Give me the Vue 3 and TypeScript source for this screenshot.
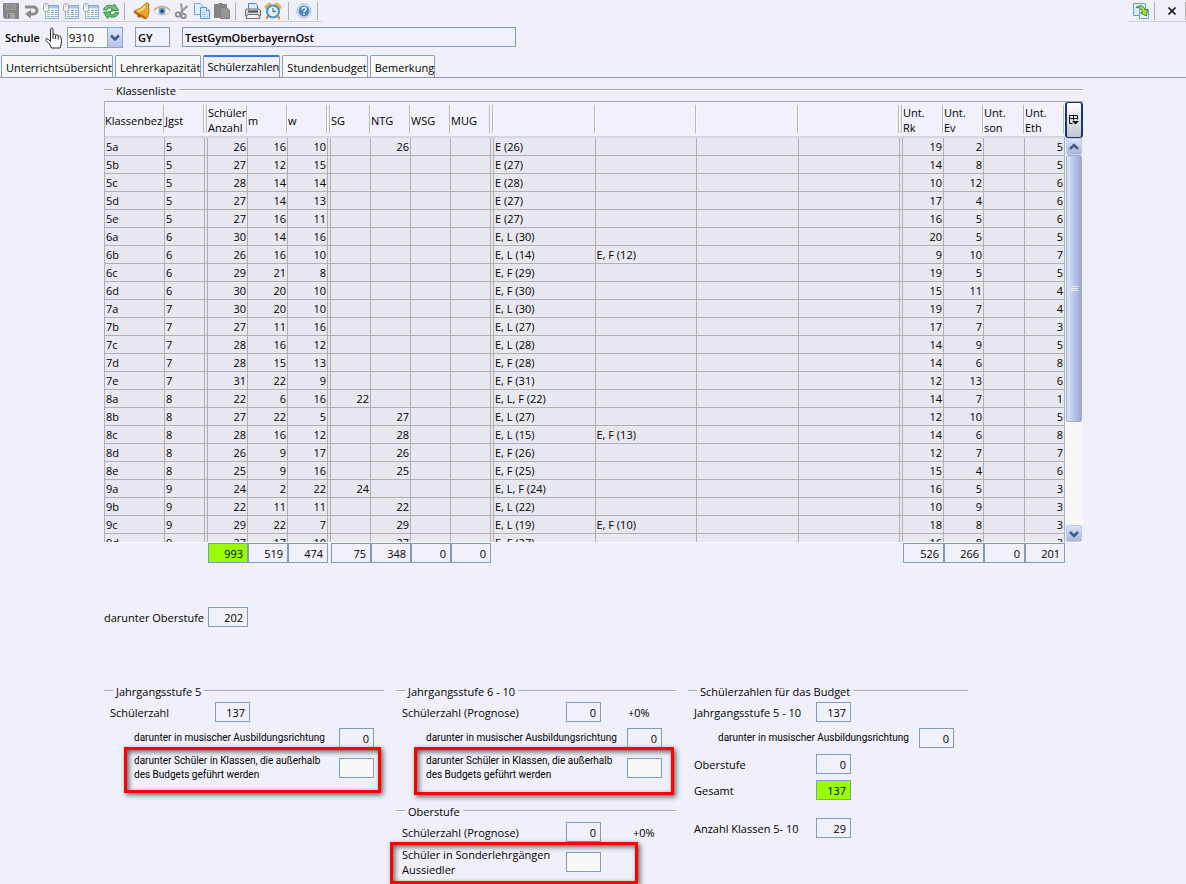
<script setup lang="ts">
import { ref } from 'vue'

type Row = [string, number, number, number, string, string, string, string, number, number, number]

const school = ref('9310')
const activeTab = ref('Schülerzahlen')
const tabs = ['Unterrichtsübersicht', 'Lehrerkapazität', 'Schülerzahlen', 'Stundenbudget', 'Bemerkung']

// Klasse, Schüler, m, w, SG, NTG, Sprachen 1, Sprachen 2, Rk, Ev, Eth
const rows: Row[] = [
  ['5a', 26, 16, 10, '', '26', 'E (26)', '', 19, 2, 5],
  ['5b', 27, 12, 15, '', '', 'E (27)', '', 14, 8, 5],
  ['5c', 28, 14, 14, '', '', 'E (28)', '', 10, 12, 6],
  ['5d', 27, 14, 13, '', '', 'E (27)', '', 17, 4, 6],
  ['5e', 27, 16, 11, '', '', 'E (27)', '', 16, 5, 6],
  ['6a', 30, 14, 16, '', '', 'E, L (30)', '', 20, 5, 5],
  ['6b', 26, 16, 10, '', '', 'E, L (14)', 'E, F (12)', 9, 10, 7],
  ['6c', 29, 21, 8, '', '', 'E, F (29)', '', 19, 5, 5],
  ['6d', 30, 20, 10, '', '', 'E, F (30)', '', 15, 11, 4],
  ['7a', 30, 20, 10, '', '', 'E, L (30)', '', 19, 7, 4],
  ['7b', 27, 11, 16, '', '', 'E, L (27)', '', 17, 7, 3],
  ['7c', 28, 16, 12, '', '', 'E, L (28)', '', 14, 9, 5],
  ['7d', 28, 15, 13, '', '', 'E, F (28)', '', 14, 6, 8],
  ['7e', 31, 22, 9, '', '', 'E, F (31)', '', 12, 13, 6],
  ['8a', 22, 6, 16, '22', '', 'E, L, F (22)', '', 14, 7, 1],
  ['8b', 27, 22, 5, '', '27', 'E, L (27)', '', 12, 10, 5],
  ['8c', 28, 16, 12, '', '28', 'E, L (15)', 'E, F (13)', 14, 6, 8],
  ['8d', 26, 9, 17, '', '26', 'E, F (26)', '', 12, 7, 7],
  ['8e', 25, 9, 16, '', '25', 'E, F (25)', '', 15, 4, 6],
  ['9a', 24, 2, 22, '24', '', 'E, L, F (24)', '', 16, 5, 3],
  ['9b', 22, 11, 11, '', '22', 'E, L (22)', '', 10, 9, 3],
  ['9c', 29, 22, 7, '', '29', 'E, L (19)', 'E, F (10)', 18, 8, 3],
  ['9d', 27, 17, 10, '', '27', 'E, F (27)', '', 16, 8, 3],
]

const totals = [
  { label: 'Schüler Anzahl', value: '993', cls: 'c-sum lime' },
  { label: 'm', value: '519', cls: 'c-m' },
  { label: 'w', value: '474', cls: 'c-w' },
  { label: 'SG', value: '75', cls: 'c-sg' },
  { label: 'NTG', value: '348', cls: 'c-ntg' },
  { label: 'WSG', value: '0', cls: 'c-wsg' },
  { label: 'MUG', value: '0', cls: 'c-mug' },
  { label: 'Unt. Rk', value: '526', cls: 'c-rk' },
  { label: 'Unt. Ev', value: '266', cls: 'c-ev' },
  { label: 'Unt. son', value: '0', cls: 'c-son' },
  { label: 'Unt. Eth', value: '201', cls: 'c-eth' },
]
</script>

<template>
  <div class="app">
    <header class="bars">
      <div class="toolbar">
        <button class="tool" aria-label="Speichern">
          <svg width="18" height="18" viewBox="0 0 18 18"><path d="M1 2q0-1 1-1h14q1 0 1 1v14q0 1-1 1H3l-2-2z" fill="#858585" /><path d="M4 2h10v6H4z" fill="#9c9c9c" /><path d="M5 4h8M5 6h8" stroke="#858585" /><path d="M5 11h8v6H5z" fill="#a6a6a6" /><path d="M6 12h2v4H6z" fill="#777" /></svg>
        </button>
        <button class="tool" aria-label="Rückgängig">
          <svg width="18" height="18" viewBox="0 0 18 18"><path d="M3 5h8.500a3.500 3.500 0 0 1 0 7H8" fill="none" stroke="#8a8a8a" stroke-width="3" /><path d="M9 7.500v9L3 12z" fill="#8a8a8a" /></svg>
        </button>
        <button v-for="n in 3" :key="n" class="tool" :aria-label="'Tabelle ' + n">
          <svg width="18" height="18" viewBox="0 0 18 18"><path d="M3.500 3.500h13v13h-13z" fill="#fff" stroke="#86aedb" /><path d="M7 4h9v2.500H7z" fill="#a3c3e8" /><path d="M5 8.500h3M5 10.500h3M5 12.500h3M5 14.500h3" stroke="#8fbf78" /><path d="M9 8.500h3M13 8.500h2.500M9 10.500h3M13 10.500h2.500M9 12.500h3M13 12.500h2.500M9 14.500h3M13 14.500h2.500" stroke="#6f9fd6" /><rect x="1.500" y="1.500" width="5" height="8" rx="2" fill="#f2f2f2" stroke="#ababab" /><path d="M4 2v3" stroke="#bbb" /></svg>
        </button>
        <button class="tool" aria-label="Aktualisieren">
          <svg width="18" height="18" viewBox="0 0 18 18"><path d="M1.500 8C2 4 6.500 2 11 4.200L12.500 2l4 6.200-7.500.6 1.300-2.300C7.500 5.300 5.500 6 4.800 8z" fill="#7cc47d" stroke="#2f8f43" /><path d="M16.500 10.500c-.5 4-5 6-9.500 3.800L5.500 16.500l-4-6.200 7.500-.6-1.300 2.300c2.800 1.200 4.800.5 5.500-1.500z" fill="#6dbb70" stroke="#2f8f43" /></svg>
        </button>
        <span class="sep"></span>
        <button class="tool bell" aria-label="Benachrichtigung">
          <svg width="18" height="18" viewBox="0 0 18 18"><path d="M14 1c2 .3 2.500 1.500 1.500 3 1 4 .5 7.500-1.500 12l-1.500 1L1 10.500l.5-2C6 7.500 9 5.500 11.500 2.500 12.300 1.500 13 1 14 1z" fill="#eda532" stroke="#bb7715" /><path d="M12.500 4C10 7.500 7 9 4 10" fill="none" stroke="#ffdf86" stroke-width="2" /><path d="M1.500 10l11 6" stroke="#b36a12" stroke-width="2" /><circle cx="6" cy="14" r="1.700" fill="#a35a12" /></svg>
        </button>
        <button class="tool" aria-label="Ansicht">
          <svg width="18" height="18" viewBox="0 0 18 18"><path d="M1 9.500C4 4.500 14 4.500 17 9.500c-3 4.500-13 4.500-16 0z" fill="#fff" stroke="#e0bfa9" /><path d="M1 8.500C4 3 14 3 17 8.500" fill="none" stroke="#d3a98e" stroke-width="1.500" /><circle cx="9" cy="9" r="3.500" fill="#6e9fd4" /><circle cx="9" cy="9" r="1.600" fill="#1c3558" /></svg>
        </button>
        <button class="tool" aria-label="Ausschneiden">
          <svg width="18" height="18" viewBox="0 0 18 18"><path d="M8 1.500l1.500 9.500M14.500 4L7 11" stroke="#999" stroke-width="2" /><circle cx="5" cy="12.500" r="2.200" fill="none" stroke="#8a8a8a" stroke-width="1.800" /><circle cx="10.500" cy="14" r="2.200" fill="none" stroke="#8a8a8a" stroke-width="1.800" /></svg>
        </button>
        <button class="tool" aria-label="Kopieren">
          <svg width="18" height="18" viewBox="0 0 18 18"><path d="M1.500 1.500h6l3 3v8h-9z" fill="#e3effc" stroke="#71a3dc" /><path d="M7.500 5.500h6l3 3v8h-9z" fill="#d4e6fa" stroke="#5b93d5" /><path d="M13.500 5.500v3h3" fill="#fff" stroke="#5b93d5" /><path d="M9 10.500h5M9 12.500h6M9 14.500h6" stroke="#b4d0f0" /></svg>
        </button>
        <button class="tool" aria-label="Einfügen">
          <svg width="18" height="18" viewBox="0 0 18 18"><path d="M1 2h4l1-1h3l1 1h4v14H1z" fill="#858585" /><path d="M7.500 5.500h6l3 3v8h-9z" fill="#969696" stroke="#7f7f7f" /></svg>
        </button>
        <span class="sep"></span>
        <button class="tool print" aria-label="Drucken">
          <svg width="18" height="18" viewBox="0 0 18 18"><path d="M4.500 1.500h7l2 2V9h-9z" fill="#dcebfb" stroke="#4a83c7" /><path d="M1.500 9q0-2 2-2h11q2 0 2 2v5h-15z" fill="#d6d6d6" stroke="#6e6e72" /><path d="M4 9.500h10" stroke="#494b50" stroke-width="2" /><path d="M3.500 12.500h11l1.500 4H2z" fill="#f3f3f3" stroke="#707276" /></svg>
        </button>
        <button class="tool clock" aria-label="Termine">
          <svg width="18" height="18" viewBox="0 0 18 18"><path d="M2.500 5l3-2.500M15.500 5l-3-2.500" stroke="#e8b04a" stroke-width="4" stroke-linecap="round" /><path d="M4 14l-1.500 3M14 14l1.500 3" stroke="#cf8a26" stroke-width="2" /><circle cx="9" cy="9.500" r="6" fill="#e2f2ff" stroke="#4490d6" stroke-width="2" /><path d="M9 6v4l3-1" fill="none" stroke="#456" /></svg>
        </button>
        <span class="sep"></span>
        <button class="tool help" aria-label="Hilfe">
          <svg width="18" height="18" viewBox="0 0 18 18"><circle cx="9" cy="9" r="7" fill="#e6eef8" stroke="#a3bcdc" /><circle cx="9" cy="9" r="5.500" fill="#4c86cb" /><path d="M7 7.500c0-3 4.500-2.500 4 0-.3 1-2 1.200-2 2.700M9 11.500v1.500" fill="none" stroke="#fff" stroke-width="1.500" /></svg>
        </button>
        <span class="sep"></span>
      </div>
      <div class="toolbar right">
        <button class="tool" aria-label="Übernehmen">
          <svg width="18" height="18" viewBox="0 0 18 18"><path d="M1.500 1.500h12v12h-12z" fill="#dcecff" stroke="#6b9fdc" /><path d="M7.500 7.500h9v9h-9z" fill="#eef6ff" stroke="#6b9fdc" /><path d="M4 5.500C7.500 2.500 12 3.500 13 8l2.500-1-1 7L8.500 11l2-1C9.500 6.500 7.500 5.500 4 5.500z" fill="#a4e03c" stroke="#39823a" /></svg>
        </button>
        <span class="sep"></span>
        <button class="tool close" aria-label="Schließen">
          <svg width="18" height="18" viewBox="0 0 18 18"><path d="M5.500 5.500l7 7M12.500 5.500l-7 7" stroke="#111" stroke-width="1.700" /></svg>
        </button>
        <span class="sep"></span>
      </div>
    </header>

    <form class="school" @submit.prevent>
      <label for="school">Schule</label>
      <svg class="hand" width="18" height="23" viewBox="0 0 18 23"><path d="M5.500 14.500V2.500q0-1.500 1.200-1.500T8 2.500V8q.3-.9 1.400-.7 1.200.1 1.200 1.200.3-.7 1.400-.5 1.200.2 1.200 1.300.4-.6 1.400-.3 1 .3 1.400 1.700.8 3 .3 6l-1.300 4.300H6.500L4.500 17 1 13.500q-.5-1.400.9-1.800 1.400 0 3.600 2.800z" fill="#fff" stroke="#222" /><path d="M8 8v4M10.600 8.500V12M13.200 9.500V12.500" stroke="#222" /></svg>
      <span class="combo">
        <select id="school" v-model="school"><option>9310</option></select>
        <span class="combo-btn"><svg width="10" height="8" viewBox="0 0 10 8"><path d="M1 1.500l4 4 4-4" fill="none" stroke="#3f5e86" stroke-width="2.500" /></svg></span>
      </span>
      <input class="field type" aria-label="Schulart" value="GY" readonly />
      <input class="field name" aria-label="Schulname" value="TestGymOberbayernOst" readonly />
    </form>

    <nav class="tabs" role="tablist">
      <button
        v-for="t in tabs"
        :key="t"
        role="tab"
        :aria-selected="t === activeTab"
        :class="['tab', { active: t === activeTab }]"
        @click="activeTab = t"
      >{{ t }}</button>
    </nav>

    <main>
      <section>
        <h2 class="title">Klassenliste</h2>
        <div class="listing">
          <div class="clip">
            <table>
              <colgroup>
                <col class="w60" /><col class="w40" /><col class="w3" />
                <col class="w40" /><col class="w40" /><col class="w40" /><col class="w3" />
                <col class="w40" /><col class="w40" /><col class="w40" /><col class="w40" /><col class="w3" />
                <col /><col /><col /><col /><col class="w3" />
                <col class="w41" /><col class="w40" /><col class="w41" /><col class="w40" />
              </colgroup>
              <thead>
                <tr>
                  <th>Klassenbez</th><th>Jgst</th><th></th>
                  <th>Schüler<br />Anzahl</th><th>m</th><th>w</th><th></th>
                  <th>SG</th><th>NTG</th><th>WSG</th><th>MUG</th><th></th>
                  <th></th><th></th><th></th><th></th><th></th>
                  <th>Unt.<br />Rk</th><th>Unt.<br />Ev</th><th>Unt.<br />son</th><th>Unt.<br />Eth</th>
                </tr>
              </thead>
              <tbody>
                <tr v-for="r in rows" :key="r[0]">
                  <td>{{ r[0] }}</td><td>{{ r[0][0] }}</td><td></td>
                  <td class="n">{{ r[1] }}</td><td class="n">{{ r[2] }}</td><td class="n">{{ r[3] }}</td><td></td>
                  <td class="n">{{ r[4] }}</td><td class="n">{{ r[5] }}</td><td></td><td></td><td></td>
                  <td>{{ r[6] }}</td><td>{{ r[7] }}</td><td></td><td></td><td></td>
                  <td class="n">{{ r[8] }}</td><td class="n">{{ r[9] }}</td><td></td><td class="n">{{ r[10] }}</td>
                </tr>
              </tbody>
            </table>
          </div>
          <div class="side">
            <button class="columns" aria-label="Spalten auswählen">
              <svg width="12" height="12" viewBox="0 0 12 12"><path d="M4.500 9.500h-3v-8h8v4M1.500 4.500h8M5.500 1.500v5" fill="none" stroke="#111" /><path d="M4 7h7L7.500 10.500z" fill="#111" /></svg>
            </button>
            <button class="arrow" aria-label="Nach oben"><svg width="10" height="8" viewBox="0 0 10 8"><path d="M1 6l4-4 4 4" fill="none" stroke="#3f5e86" stroke-width="2.500" /></svg></button>
            <div class="track"><div class="thumb"><i></i><i></i><i></i></div></div>
            <button class="arrow" aria-label="Nach unten"><svg width="10" height="8" viewBox="0 0 10 8"><path d="M1 2l4 4 4-4" fill="none" stroke="#3f5e86" stroke-width="2.500" /></svg></button>
          </div>
        </div>
        <div class="totals">
          <input v-for="t in totals" :key="t.label" :class="['field', 'num', t.cls]" :aria-label="'Summe ' + t.label" :value="t.value" readonly />
        </div>
        <div class="upper">
          <label for="upper">darunter Oberstufe</label>
          <input id="upper" class="field num" value="202" readonly />
        </div>
      </section>

      <div class="groups">
        <section class="g1">
          <h2 class="title">Jahrgangsstufe 5</h2>
          <div class="line"><label for="a1">Schülerzahl</label><input id="a1" class="field num" value="137" readonly /></div>
          <div class="line sub"><label for="a2">darunter in musischer Ausbildungsrichtung</label><input id="a2" class="field num" value="0" readonly /></div>
          <div class="line sub"><label for="a3">darunter Schüler in Klassen, die außerhalb<br />des Budgets geführt werden</label><input id="a3" class="field num edit" /><span class="mark"></span></div>
        </section>

        <section class="g2">
          <h2 class="title">Jahrgangsstufe 6 - 10</h2>
          <div class="line"><label for="b1">Schülerzahl (Prognose)</label><input id="b1" class="field num" value="0" readonly /><span class="pct">+0%</span></div>
          <div class="line sub"><label for="b2">darunter in musischer Ausbildungsrichtung</label><input id="b2" class="field num" value="0" readonly /></div>
          <div class="line sub"><label for="b3">darunter Schüler in Klassen, die außerhalb<br />des Budgets geführt werden</label><input id="b3" class="field num edit" /><span class="mark"></span></div>
          <h2 class="title second">Oberstufe</h2>
          <div class="line"><label for="b4">Schülerzahl (Prognose)</label><input id="b4" class="field num" value="0" readonly /><span class="pct far">+0%</span></div>
          <div class="line special"><label for="b5">Schüler in Sonderlehrgängen<br />Aussiedler</label><input id="b5" class="field num edit" /><span class="mark"></span></div>
        </section>

        <section class="g3">
          <h2 class="title">Schülerzahlen für das Budget</h2>
          <div class="line"><label for="c1">Jahrgangsstufe 5 - 10</label><input id="c1" class="field num" value="137" readonly /></div>
          <div class="line sub"><label for="c2">darunter in musischer Ausbildungsrichtung</label><input id="c2" class="field num" value="0" readonly /></div>
          <div class="line"><label for="c3">Oberstufe</label><input id="c3" class="field num" value="0" readonly /></div>
          <div class="line"><label for="c4">Gesamt</label><input id="c4" class="field num lime" value="137" readonly /></div>
          <div class="line last"><label for="c5">Anzahl Klassen 5- 10</label><input id="c5" class="field num" value="29" readonly /></div>
        </section>
      </div>
    </main>
  </div>
</template>

<style>
body {
  background: #f0f0fa;
}
</style>

<style scoped>
.app {
  font: 11px/15px "Open Sans", "Noto Sans", sans-serif;
  color: #000;
}
.app *,
.app *::before,
.app *::after {
  box-sizing: border-box;
}
button,
input,
select {
  font: inherit;
  color: inherit;
  margin: 0;
  padding: 0;
  border: 0;
  border-radius: 0;
  background: none;
}
.bars {
  display: flex;
  justify-content: space-between;
}
.toolbar {
  display: flex;
  align-items: center;
  height: 22px;
  padding-left: 1px;
  border-bottom: 1px solid #d2d0dc;
}
.toolbar.right {
  padding-left: 2px;
}
.tool {
  width: 20px;
  height: 20px;
  display: grid;
  place-items: center;
}
.sep {
  width: 1px;
  height: 18px;
  margin: 0 4px 0 3px;
  background: #b0b0b0;
}
.bell,
.print {
  margin-left: 3px;
}
.clock {
  margin-right: 2px;
}
.help {
  margin-left: 1px;
}
.close {
  margin: 0 0 0 3px;
}
.right .sep:last-child {
  margin-right: 0;
}
.school {
  position: relative;
  display: flex;
  padding: 5px 0 8px 5px;
  height: 33px;
}
.school > label {
  width: 62px;
  line-height: 22px;
  font-weight: 600;
}
.hand {
  position: absolute;
  left: 45px;
  top: 5px;
}
.combo {
  position: relative;
  width: 56px;
  height: 21px;
  margin-right: 12px;
}
.combo select {
  appearance: none;
  width: 100%;
  height: 100%;
  padding-left: 1px;
  border: 1px solid #7f9db9;
  background: #f8f8f8;
}
.combo-btn {
  position: absolute;
  right: 0;
  top: 0;
  bottom: 0;
  width: 16px;
  display: grid;
  place-items: center;
  border: 1px solid #8ea8cc;
  border-radius: 2px;
  background: linear-gradient(#dfe7fb, #b4c2e4);
  pointer-events: none;
}
.field {
  height: 20px;
  border: 1px solid #7f9db9;
  background: #f0f1fa;
  min-width: 0;
}
.num {
  width: 35px;
  padding-right: 4px;
  text-align: right;
}
.field.lime {
  background: #99ff00;
}
.edit {
  background: #f8f8f8;
}
.type,
.name {
  padding-left: 2px;
  font-weight: 600;
}
.type {
  width: 35px;
  margin-right: 12px;
}
.name {
  width: 334px;
}
.tabs {
  display: flex;
  gap: 2px;
  height: 23px;
  padding-left: 1px;
  border-bottom: 1px solid #8c9aa8;
}
.tab {
  height: 22px;
  padding: 3px 0 0 4px;
  border: 1px solid #8ca0b8;
  border-bottom: 0;
  border-radius: 2px 2px 0 0;
  background: #f8f8f8;
  line-height: 16px;
}
.tab.active {
  padding: 0 0 1px 3px;
  border-top: 2px solid #3a74e8;
  background: #f0f0fa;
}
main {
  padding: 4px 103px 0 104px;
}
.title {
  display: flex;
  align-items: center;
  gap: 3px;
  height: 16px;
  margin: 0 0 3px;
  font-size: 11px;
  font-weight: 400;
  white-space: nowrap;
}
.title::before,
.title::after {
  content: "";
  width: 9px;
  height: 2px;
  border-top: 1px solid #a8a8b0;
  background: #fafafe;
}
.title::after {
  flex: 1;
}
.listing {
  display: flex;
  height: 442px;
  border-top: 1px solid #a8a8a8;
  border-bottom: 1px solid #fafafa;
}
.clip {
  flex: 1;
  min-width: 0;
  overflow: hidden;
  border-left: 1px solid #b0b0b0;
}
table {
  width: 100%;
  table-layout: fixed;
  border-collapse: separate;
  border-spacing: 0;
}
.w60 { width: 60px; }
.w41 { width: 41px; }
.w40 { width: 40px; }
.w3 { width: 3px; }
th {
  height: 36px;
  padding: 0;
  text-align: left;
  font-weight: 400;
  white-space: nowrap;
  background:
    linear-gradient(#b8b8b8, #b8b8b8) right 1px top 3px / 1px 28px no-repeat,
    linear-gradient(#fafafe, #fafafe) right 0 top 3px / 1px 28px no-repeat,
    linear-gradient(#d6d6e0, #d6d6e0) left bottom / 100% 2px no-repeat,
    #f0f1fa;
}
td {
  height: 18px;
  padding: 0 1px;
  line-height: 17px;
  white-space: nowrap;
  overflow: hidden;
  border-right: 1px solid #b0b0b0;
  border-bottom: 1px solid #b0b0b0;
  background: #e8e8f0;
}
td:nth-child(3),
td:nth-child(7),
td:nth-child(12),
td:nth-child(17) {
  padding: 0;
}
td.n {
  text-align: right;
}
.side {
  display: flex;
  flex-direction: column;
  width: 18px;
}
.columns {
  height: 36px;
  display: grid;
  place-items: center;
  border: 2px solid #16396c;
  border-width: 1px 2px;
  border-radius: 3px;
  background: linear-gradient(#fff, #c4c6d2);
}
.arrow {
  width: 16px;
  height: 17px;
  margin: 0 1px;
  display: grid;
  place-items: center;
  border: 1px solid #c0ccea;
  border-radius: 2px;
  background: linear-gradient(#dce4fa, #a8b4dc);
}
.track {
  flex: 1;
  background: #f8f8f8;
}
.thumb {
  height: 267px;
  width: 16px;
  margin: 0 1px;
  display: flex;
  flex-direction: column;
  justify-content: center;
  align-items: center;
  gap: 1px;
  border: 1px solid #9aaed8;
  border-radius: 2px;
  background: linear-gradient(90deg, #dfe7fb, #b8c6ec 50%, #9ca8d0);
}
.thumb i {
  width: 7px;
  height: 1px;
  background: #e6edff;
}
.totals {
  display: grid;
  grid-template-columns: 104px repeat(3, 40px) 3px repeat(4, 40px) 1fr 41px 40px 41px 40px 18px;
}
.totals .field {
  width: auto;
}
.c-sum { grid-column: 2; }
.c-m { grid-column: 3; }
.c-w { grid-column: 4; }
.c-sg { grid-column: 6; }
.c-ntg { grid-column: 7; }
.c-wsg { grid-column: 8; }
.c-mug { grid-column: 9; }
.c-rk { grid-column: 11; }
.c-ev { grid-column: 12; }
.c-son { grid-column: 13; }
.c-eth { grid-column: 14; }
.upper {
  display: flex;
  align-items: center;
  margin: 44px 0 56px;
}
.upper label {
  width: 104px;
}
.upper input {
  width: 40px;
}
.groups {
  display: grid;
  grid-template-columns: repeat(3, minmax(0, 280px));
  gap: 12px;
  padding-bottom: 7px;
}
.line {
  position: relative;
  display: flex;
  align-items: center;
  margin-bottom: 6px;
  padding-left: 6px;
  white-space: nowrap;
}
.line label {
  flex: none;
}
.line.sub {
  padding-left: 30px;
}
.sub label {
  font-family: Roboto, "Open Sans", sans-serif;
  font-size: 10px;
  line-height: 14px;
}
.g1 label { width: 105px; }
.g1 .sub label { width: 205px; }
.g2 label { width: 164px; }
.g2 .sub label { width: 201px; }
.g3 label { width: 122px; }
.g3 .sub label { width: 201px; }
.pct {
  margin-left: 27px;
}
.pct.far {
  margin-left: 32px;
}
.second {
  margin-top: 21px;
}
.line.last {
  margin-top: 18px;
}
.line.special {
  margin: -1px 0 0;
}
.mark {
  position: absolute;
  left: 20px;
  right: 3px;
  top: -7px;
  bottom: -11px;
  border: 3px solid #f00;
  box-shadow: 2px 2px 5px rgba(0, 0, 0, 0.6), inset 2px 2px 5px rgba(0, 0, 0, 0.6);
  pointer-events: none;
}
.g2 .mark {
  left: 18px;
  right: 2px;
  bottom: -13px;
}
.g2 .special .mark {
  left: -6px;
  right: 38px;
  top: -5px;
  bottom: -7px;
}
</style>
